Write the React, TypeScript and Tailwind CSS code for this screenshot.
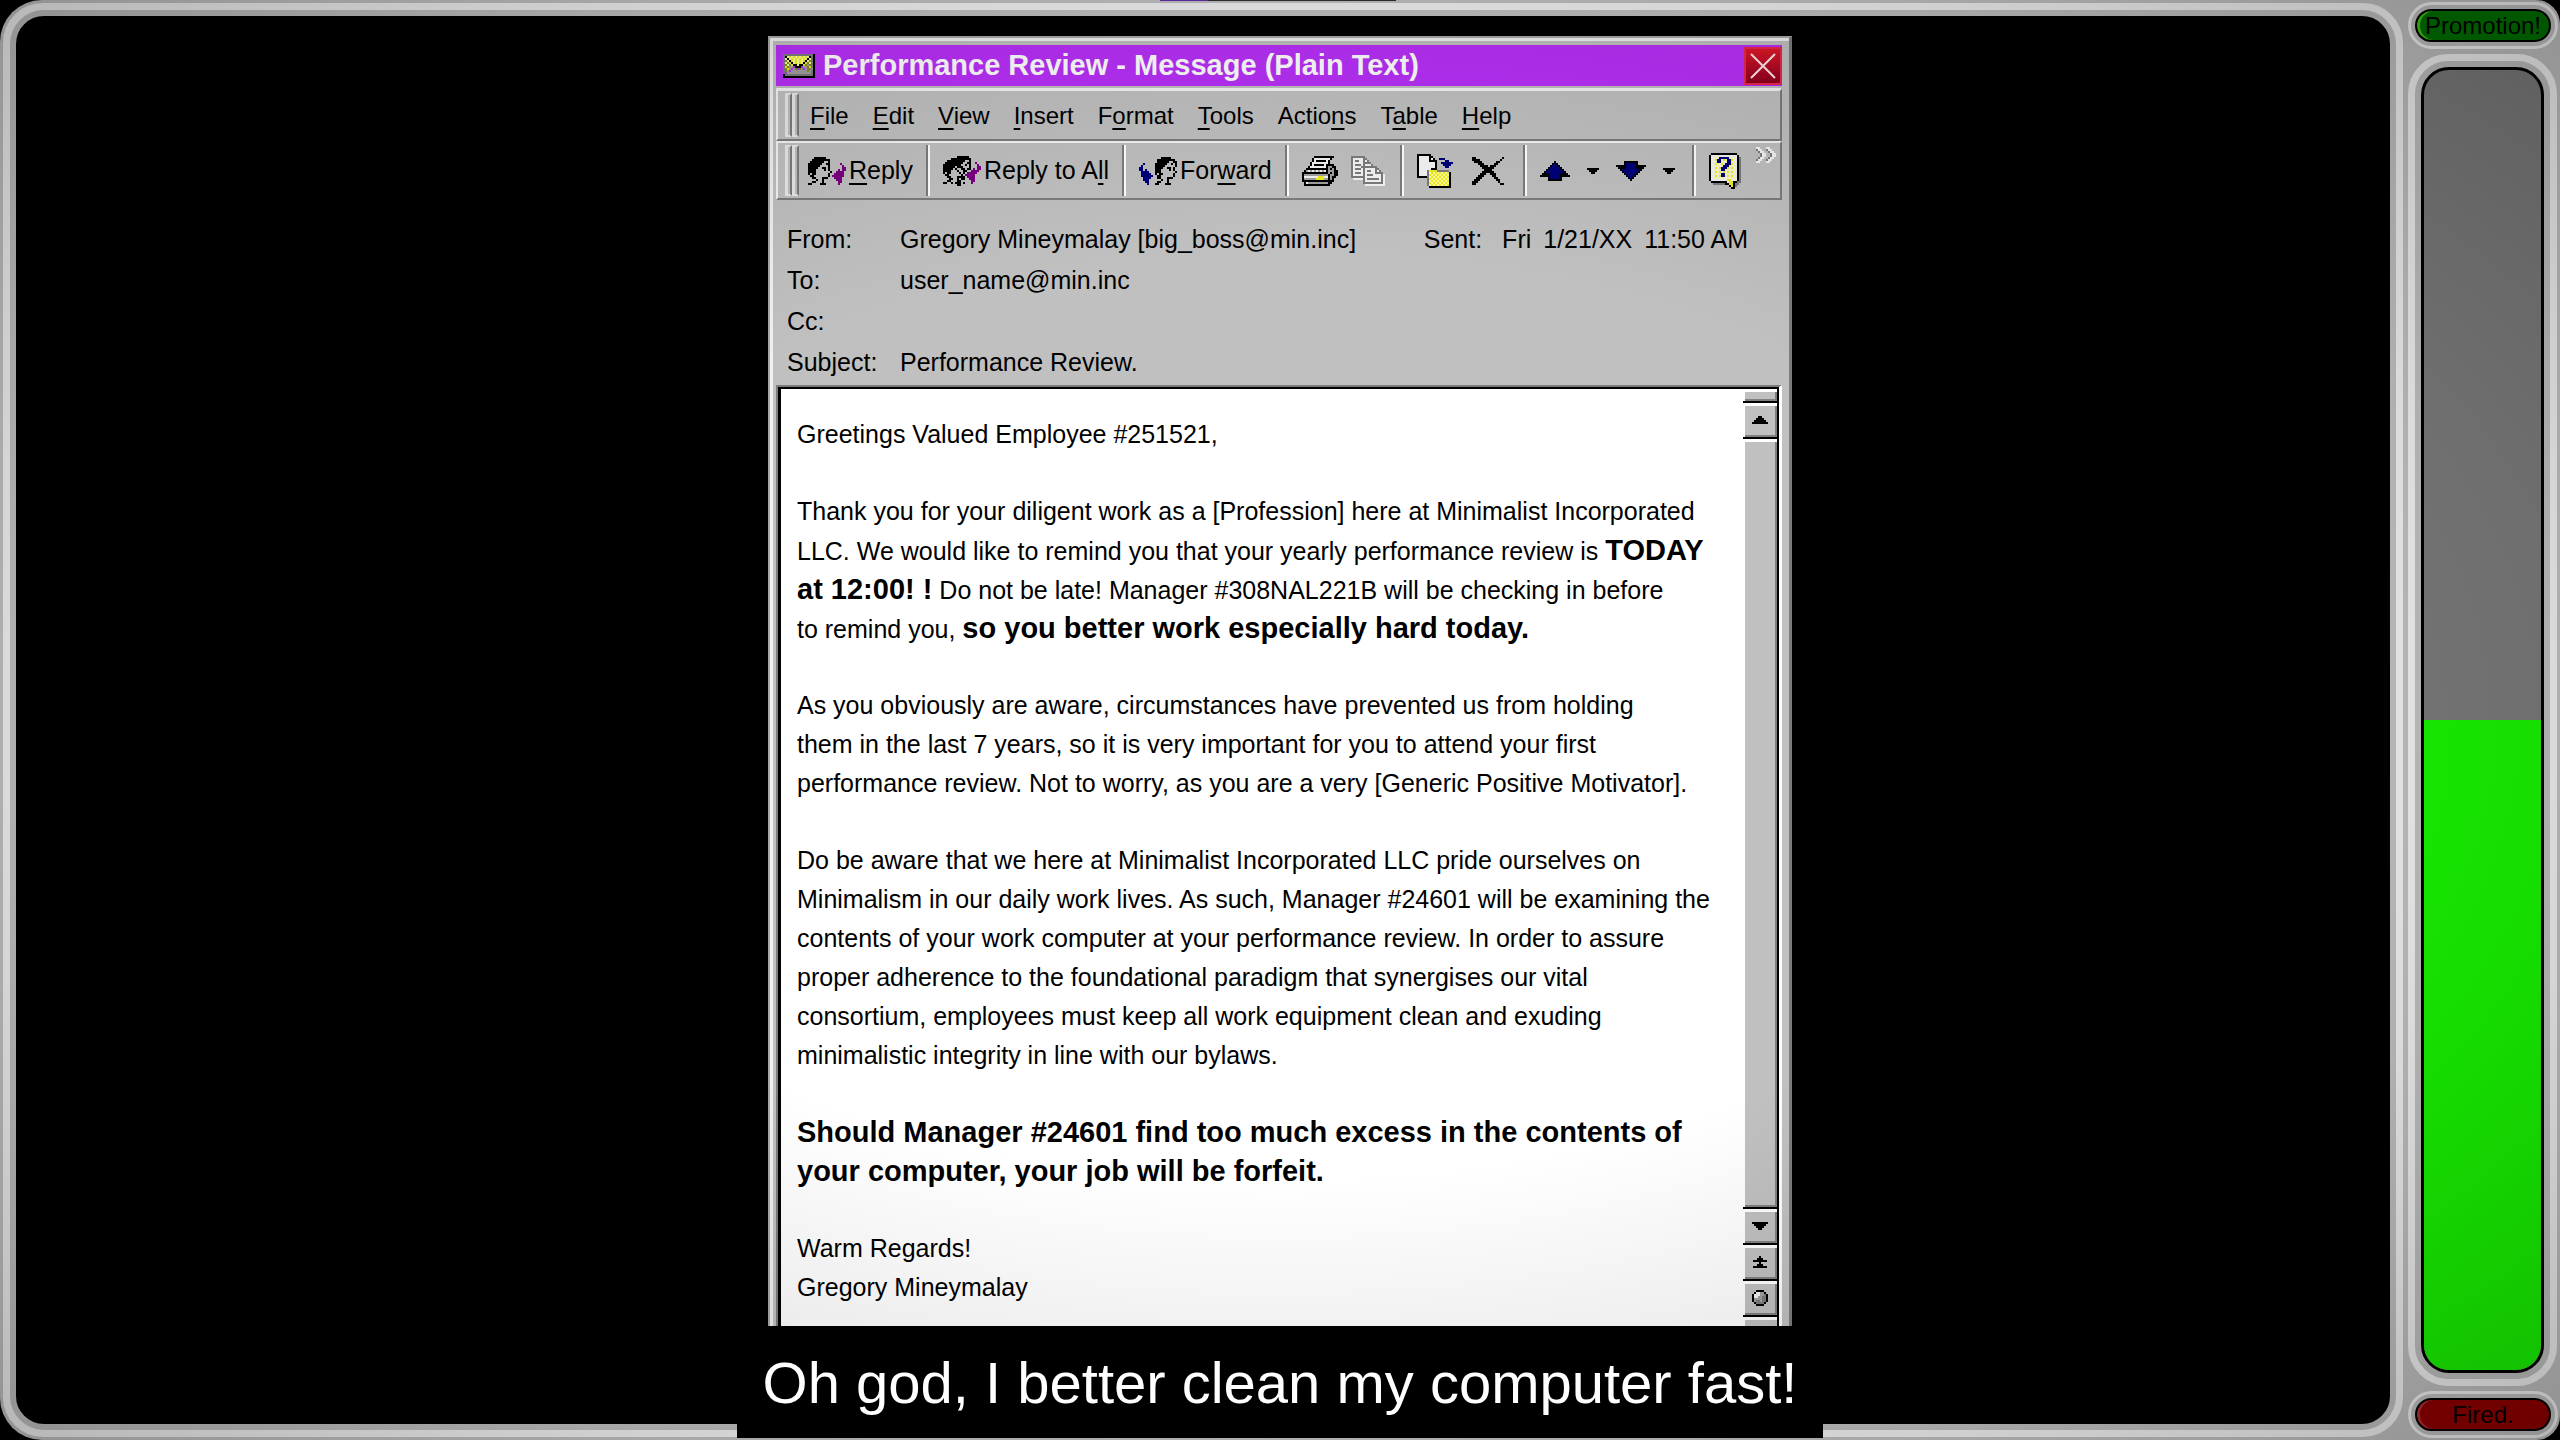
import React from "react";

const PALETTE: Record<string, string> = {
  k: "#000000",
  p: "#7a0080",
  b: "#00007a",
  w: "#f4f4f4",
  y: "#f0ee20",
  Y: "#ffffa0",
  g: "#7c7c7c",
  s: "#a0a0a0",
  o: "#8a8a20",
};

/* Draws an icon from rows of palette letters, two screen pixels per cell. */
function Pixels({ rows }: { rows: string[] }) {
  const w = Math.max(...rows.map((r) => r.length));
  const cells: React.ReactNode[] = [];
  rows.forEach((row, y) => {
    let x = 0;
    while (x < row.length) {
      const c = row[x];
      let end = x + 1;
      while (end < row.length && row[end] === c) end++;
      if (PALETTE[c]) cells.push(<rect key={`${x}-${y}`} x={x} y={y} width={end - x} height={1} fill={PALETTE[c]} />);
      x = end;
    }
  });
  return (
    <svg aria-hidden="true" className="shrink-0" width={w * 2} height={rows.length * 2} viewBox={`0 0 ${w} ${rows.length}`} shapeRendering="crispEdges">
      {cells}
    </svg>
  );
}

const ENVELOPE = [
  "gggggggggggggggk",
  "gkYyYyYyYyYyYkgk",
  "gYkYyYyYyYyYkYgk",
  "goYkyYyYyYykYogk",
  "gYoykYyYyYkyoYgk",
  "goYoykkYkkyosogk",
  "gyoss.kkk.ssoygk",
  "goys.so.os.sogsk",
  "gos.ssssssssosgk",
  "g.ssssssssssssgk",
  "kggggggggggggggk",
  "kkkkkkkkkkkkkkkk",
];
const REPLY = [
  "...kkkkkk..........",
  "..kkkkkkkkk........",
  ".kkkkkkk..k........",
  "kkkkkkk..kk.....p..",
  "kkkkkk....k......p.",
  "kkkkk..kk.k......pp",
  "kkkk....k.k....p.pp",
  "kkkk.......k..pppp.",
  "k.kk......k..ppppp.",
  ".kk.......k.pppppp.",
  "..kk...kkk...pppp..",
  "....k..k......ppp..",
  "..kk...k.......pp..",
  "kk....kkk......p...",
];
const REPLY_ALL = [
  ".......kkkkkk......",
  "....kkkkkkkkkk.....",
  "..kkkkkkkkk..k.....",
  ".kkkkkkkkk..kk..p..",
  "kkkkkkkkk..k.k...p.",
  "kkkkkk.kkk...k...pp",
  "kkkkk.k..kk.kk.p.pp",
  "kkkk...k..kk..pppp.",
  "k.kk....k.k.ppppp..",
  ".kk......k.ppppp...",
  "..kk...kkkk.pppp...",
  "...kk..k.kk..ppp...",
  "..kk...kk.....pp...",
  "kk..k.kkk.k...p....",
  ".......kk..........",
];
const FORWARD = [
  "...........kkkkk...",
  ".........kkkkkkkkk.",
  ".........kkkkkk..kk",
  "..b.....kkkkkk..k.k",
  ".b......kkkkk.....k",
  "bb......kkkk..kk.k.",
  "bb.b....kkk....k.k.",
  ".bbbb...kkk.......k",
  ".bbbbb..k.kk.....k.",
  ".bbbbbb..kk......k.",
  "..bbbb...kk...kkk..",
  "..bbb......k..k....",
  "...bb....kk...k....",
  "....b...kk...kkk...",
];
const PRINTER = [
  "......kkkkkkkkkk..",
  ".....kwwwwwwwwk...",
  ".....kwkkkkkwk....",
  "....kwwwwwwwwk....",
  "....kwkkkkkwkkkk..",
  "...kwwwwwwwwksskk.",
  "..kkkkkkkkkkksksk.",
  ".kswswswswswkssskk",
  "kkkkkkkkkkkkkskskk",
  "kssssssssssssksskk",
  "kwwwwwwwyyywwkskk.",
  "kssssssyyyyssksk..",
  "kkkkkkkkkkkkkkkk..",
  ".kwsssssssssskk...",
  ".kkkkkkkkkkkkk....",
];
const COPY = [
  "ggggggg...........",
  "gwwwwwgg..........",
  "gwggwwgwg.........",
  "gwwwwwgggg........",
  "gwgggwgwwwg.......",
  "gwwwwgggggggg.....",
  "gwgggwgwwwwwgg....",
  "gwwwwwgwggwwgwg...",
  "gwgggwgwwwwwgggg..",
  "gwwwwwgwgggwwwwgw.",
  "gggggggwwwwwwwwgw.",
  ".wwwwwgwggggggwgw.",
  "......gwwwwwwwwgw.",
  "......ggggggggggw.",
  ".......wwwwwwwwww.",
];
const MOVE = [
  "kkkkkkk...........",
  "kwwwwwkk..........",
  "kwwwwwkwk..bbb....",
  "kwwwwwkkkk....bb..",
  "kwwwwwwwwk..bbbbbb",
  "kwwwwwwwwk...bbbb.",
  "kwwwwwwwwk....bb..",
  "kwwwwwwkkk........",
  "kwwwwgyyyygggggg..",
  "kwwwwgYyYyYyYyYyk.",
  "kwwwwgyYyYyYyYyYk.",
  "kkkkkgYyYyYyYyYyk.",
  ".....gyYyYyYyYyYk.",
  ".....gYyYyYyYyYyk.",
  ".....gyYyYyYyYyYk.",
  ".....gYyYyYyYyYyk.",
  "......kkkkkkkkkkk.",
];
const DELETE = [
  "kk.............k",
  "kkkk..........k.",
  ".kkkk.......kk..",
  "...kkk.....kk...",
  "....kkkk.kkk....",
  ".....kkkkkk.....",
  "......kkkk......",
  ".....kkkkkk.....",
  "....kkk..kkk....",
  "...kkk....kk....",
  "..kkk......kk...",
  ".kkk........kk..",
  "kkk..........k..",
  "kk............kk",
];
const UP = [
  ".......k.......",
  "......kbk......",
  ".....kbbbk.....",
  "....kbbbbbk....",
  "...kbbbbbbbk...",
  "..kbbbbbbbbbk..",
  ".kkkkbbbbbkkkk.",
  "kkkkkbbbbbkkkkk",
  "....kbbbbbk....",
  "....kkkkkkk....",
];
const DOWN = [...UP].reverse();
const SMALL_DOWN = ["kkkkkk", ".kkkk.", "..kk.."];
const HELP = [
  ".kkkkkkkkkkkkk.",
  "kwwwwwwwwwwwwwk",
  "kwYwYbbbbbYwYwkg",
  "kwwybbwyYbbywwkg",
  "kwYwbbYwYbbwYwkg",
  "kwwyYwywbbbywwkg",
  "kwYwYwYbbbYwYwkg",
  "kwwywybbbywywwkg",
  "kwYwYwbbYwYwYwkg",
  "kwwywywywywywwkg",
  "kwYwYwbbYwYwYwkg",
  "kwwywybbwywywwkg",
  "kwYwYwYwYwYwYwkg",
  "kwwwwwwwwyywwwkg",
  ".kkkkkkkkwyykkgg",
  "..ggggggkkyykgg.",
  "..........kykg..",
  "...........kk...",
];
const CHEVRONS = [
  "ww...ww...",
  "gww..gww..",
  ".gww..gww.",
  "..gww..gww",
  "..gww..gww",
  ".gww..gww.",
  "gww..gww..",
  "ww...ww...",
];
const ARROW_UP = ["...kk...", "..kkkk..", ".kkkkkk.", "kkkkkkkk"];
const ARROW_DOWN = [...ARROW_UP].reverse();
const PAGE_UP = ["...k...", "..kkk..", "kkkkkkk", "...k...", "..kkk..", "kkkkkkk"];
const CIRCLE = [
  "..kkkk..",
  ".kwwssk.",
  "kwwwssgk",
  "kwwssggk",
  "kssssggk",
  "ksggsggk",
  ".kggggk.",
  "..kkkk..",
];

const U = ({ children }: { children: React.ReactNode }) => (
  <span className="underline decoration-2 underline-offset-4">{children}</span>
);

const MENUS: [string, string, string][] = [
  ["", "F", "ile"],
  ["", "E", "dit"],
  ["", "V", "iew"],
  ["", "I", "nsert"],
  ["F", "o", "rmat"],
  ["", "T", "ools"],
  ["Actio", "n", "s"],
  ["T", "a", "ble"],
  ["", "H", "elp"],
];

const Grip = () => (
  <span className="flex shrink-0 self-stretch">
    <span className="w-[7px] border-2 border-l-[3px] border-[#e8e8e8] border-r-[#7c7c7c]" />
    <span className="w-[7px] border-2 border-l-[3px] border-[#e8e8e8] border-r-[#7c7c7c]" />
  </span>
);

const Divider = () => <span className="w-1 shrink-0 self-stretch border-l-2 border-r-2 border-l-[#7c7c7c] border-r-white" />;

function Tool({ label, rows, children }: { label: string; rows: string[]; children?: React.ReactNode }) {
  return (
    <button type="button" aria-label={label} className="flex shrink-0 items-center gap-[3px] whitespace-nowrap">
      <Pixels rows={rows} />
      {children && <span>{children}</span>}
    </button>
  );
}

function ScrollButton({ label, rows }: { label: string; rows: string[] }) {
  return (
    <button
      type="button"
      aria-label={label}
      className="flex h-9 shrink-0 items-center justify-center border-b-2 border-black bg-[#c0c0c0] shadow-[inset_2px_3px_0_#ffffff,inset_-2px_-2px_0_#808080]"
    >
      <Pixels rows={rows} />
    </button>
  );
}

const Field = ({ label, children }: { label: string; children?: React.ReactNode }) => (
  <div className="flex">
    <dt className="w-[113px] shrink-0">{label}</dt>
    <dd>{children}</dd>
  </div>
);

const Strong = ({ children }: { children: React.ReactNode }) => <b className="text-[29px]">{children}</b>;

const Para = ({ lines }: { lines: React.ReactNode[] }) => (
  <p className="mb-[38px]">
    {lines.map((line, i) => (
      <span key={i} className="block h-[39px]">
        {line}
      </span>
    ))}
  </p>
);

function MailWindow() {
  return (
    <section className="flex w-2/5 flex-col overflow-hidden border-l-2 border-r-[3px] border-t-2 border-[#a8a8a8] border-r-[#7c7c7c] bg-[#c0c0c0]">
      <div className="flex min-h-0 grow flex-col border-l-[3px] border-t-[3px] border-[#f0f0f0] pl-[3px] pr-[7px] pt-1 font-['Liberation_Sans',sans-serif] text-[25px] text-black">
        <header className="flex h-[41px] shrink-0 items-center bg-[#b830f8] pl-[7px]">
          <Pixels rows={ENVELOPE} />
          <h1 className="grow whitespace-nowrap pl-2 text-[29px] font-bold text-white">Performance Review - Message (Plain Text)</h1>
          <button type="button" aria-label="Close" className="flex size-[38px] items-center justify-center border-2 border-[#e82850] bg-linear-to-b from-[#e01828] to-[#900020]">
            <svg aria-hidden="true" width="26" height="26" viewBox="0 0 26 26" stroke="#ffe8e8" strokeWidth="2">
              <path d="M1 1L25 25M25 1L1 25" />
            </svg>
          </button>
        </header>
        <nav className="mt-0.5 flex h-[53px] shrink-0 items-center border-b-2 border-l-2 border-r-2 border-t-[3px] border-[#f4f4f4] border-b-[#7c7c7c] border-r-[#7c7c7c] py-0.5 pl-[7px] text-[24px]">
          <Grip />
          <ul className="flex gap-6 pl-[11px] pt-0.5">
            {MENUS.map(([a, u, b]) => (
              <li key={a + u + b}>
                <button type="button">
                  {a}
                  <U>{u}</U>
                  {b}
                </button>
              </li>
            ))}
          </ul>
        </nav>
        <div role="toolbar" className="relative flex h-[59px] shrink-0 items-center gap-[13px] border-2 border-[#f4f4f4] border-b-[#7c7c7c] border-r-[#7c7c7c] py-0.5 pl-[7px]">
          <span className="-mr-1 flex self-stretch">
            <Grip />
          </span>
          <Tool label="Reply" rows={REPLY}>
            <U>R</U>eply
          </Tool>
          <Divider />
          <Tool label="Reply to All" rows={REPLY_ALL}>
            Reply to A<U>l</U>l
          </Tool>
          <Divider />
          <Tool label="Forward" rows={FORWARD}>
            For<U>w</U>ard
          </Tool>
          <Divider />
          <Tool label="Print" rows={PRINTER} />
          <Tool label="Copy" rows={COPY} />
          <Divider />
          <Tool label="Move to folder" rows={MOVE} />
          <span className="px-1.5">
            <Tool label="Delete" rows={DELETE} />
          </span>
          <Divider />
          <Tool label="Previous" rows={UP} />
          <span className="px-1">
            <Tool label="Previous options" rows={SMALL_DOWN} />
          </span>
          <Tool label="Next" rows={DOWN} />
          <span className="px-1">
            <Tool label="Next options" rows={SMALL_DOWN} />
          </span>
          <Divider />
          <Tool label="Help" rows={HELP} />
          <span className="absolute right-1 top-1">
            <Tool label="More buttons" rows={CHEVRONS} />
          </span>
        </div>
        <div className="flex shrink-0 justify-between whitespace-nowrap pb-0.5 pl-[11px] pr-[34px] pt-[19px] leading-[41px]">
          <dl>
            <Field label="From:">Gregory Mineymalay [big_boss@min.inc]</Field>
            <Field label="To:">user_name@min.inc</Field>
            <Field label="Cc:" />
            <Field label="Subject:">Performance Review.</Field>
          </dl>
          <dl className="flex gap-5">
            <dt>Sent:</dt>
            <dd className="flex gap-3">
              <span>Fri</span>
              <span>1/21/XX</span>
              <span>11:50 AM</span>
            </dd>
          </dl>
        </div>
        <div className="flex min-h-0 grow border-l-2 border-r-[3px] border-t-2 border-[#7c7c7c] border-r-white">
          <div className="flex min-h-0 min-w-0 grow border-l-[3px] border-r-2 border-t-2 border-black">
            <article className="min-w-0 grow overflow-hidden whitespace-nowrap bg-white pl-4 pt-[26px] leading-[39px]">
              <Para lines={["Greetings Valued Employee #251521,"]} />
              <Para
                lines={[
                  "Thank you for your diligent work as a [Profession] here at Minimalist Incorporated",
                  <>
                    LLC. We would like to remind you that your yearly performance review is <Strong>TODAY</Strong>
                  </>,
                  <>
                    <Strong>at 12:00! !</Strong> Do not be late! Manager #308NAL221B will be checking in before
                  </>,
                  <>
                    to remind you, <Strong>so you better work especially hard today.</Strong>
                  </>,
                ]}
              />
              <Para
                lines={[
                  "As you obviously are aware, circumstances have prevented us from holding",
                  "them in the last 7 years, so it is very important for you to attend your first",
                  "performance review. Not to worry, as you are a very [Generic Positive Motivator].",
                ]}
              />
              <Para
                lines={[
                  "Do be aware that we here at Minimalist Incorporated LLC pride ourselves on",
                  "Minimalism in our daily work lives. As such, Manager #24601 will be examining the",
                  "contents of your work computer at your performance review. In order to assure",
                  "proper adherence to the foundational paradigm that synergises our vital",
                  "consortium, employees must keep all work equipment clean and exuding",
                  "minimalistic integrity in line with our bylaws.",
                ]}
              />
              <Para
                lines={[
                  <Strong>Should Manager #24601 find too much excess in the contents of</Strong>,
                  <Strong>your computer, your job will be forfeit.</Strong>,
                ]}
              />
              <Para lines={["Warm Regards!", "Gregory Mineymalay"]} />
            </article>
            <div className="flex w-[34px] shrink-0 flex-col">
              <div className="h-3.5 shrink-0 border-b-2 border-black bg-[#c0c0c0] shadow-[inset_2px_3px_0_#ffffff,inset_-2px_-2px_0_#808080]" />
              <ScrollButton label="Scroll up" rows={ARROW_UP} />
              <div className="grow border-b-2 border-black bg-[#c0c0c0] shadow-[inset_2px_3px_0_#ffffff,inset_-2px_-2px_0_#808080]" />
              <ScrollButton label="Scroll down" rows={ARROW_DOWN} />
              <ScrollButton label="Previous page" rows={PAGE_UP} />
              <ScrollButton label="Select browse object" rows={CIRCLE} />
              <div className="h-[9px] shrink-0 bg-[#c0c0c0] shadow-[inset_2px_3px_0_#ffffff]" />
            </div>
          </div>
        </div>
      </div>
    </section>
  );
}

const Pill = ({ tone, children }: { tone: string; children: React.ReactNode }) => (
  <div className="shrink-0 rounded-full border-[3px] border-[#f0f0f0] bg-[#c0c0c0] p-1">
    <div className={`flex h-[33px] items-center justify-center rounded-full border-2 border-black text-[24px] text-black ${tone}`}>{children}</div>
  </div>
);

export default function App() {
  return (
    <main className="relative flex h-screen overflow-hidden bg-black font-['Liberation_Sans',sans-serif]">
      <div className="grow bg-linear-to-r from-black from-50% to-[#c0c0c0] to-50%">
        <div className="h-full rounded-[42px] border-[3px] border-r-0 border-[#c0c0c0] bg-[#c0c0c0]">
          <div className="h-full rounded-[40px] border-[7px] border-[#f0f0f0] bg-[#f0f0f0]">
            <div className="h-full rounded-[34px] border-[6px] border-[#c0c0c0] bg-black" />
          </div>
        </div>
      </div>
      <aside className="flex w-[157px] shrink-0 flex-col gap-[5px] rounded-r-[24px] bg-[#c0c0c0] pl-[5px] pr-0.5 py-0.5">
        <Pill tone="bg-[#007000] shadow-[inset_3px_0_0_#40c010]">Promotion!</Pill>
        <div className="mr-px flex grow rounded-[40px] border-[7px] border-[#f0f0f0] bg-[#c0c0c0] p-1.5">
          <div role="meter" aria-label="Standing" aria-valuenow={50} aria-valuemin={0} aria-valuemax={100} className="flex grow flex-col overflow-hidden rounded-[28px] border-[3px] border-black bg-[#7a7a7a]">
            <div className="grow" />
            <div className="h-1/2 bg-[#18f400]" />
          </div>
        </div>
        <Pill tone="bg-[#900000] shadow-[inset_3px_0_0_#b03030]">Fired.</Pill>
      </aside>
      <div className="absolute left-[1160px] top-0 flex h-px w-[236px] bg-[#303030]">
        <span className="w-12 bg-[#6030b0]" />
      </div>
      <div className="absolute inset-x-0 bottom-[114px] top-9 flex justify-center">
        <MailWindow />
      </div>
      <div className="pointer-events-none absolute inset-0 bg-[radial-gradient(ellipse_farthest-corner_at_center,transparent_45%,rgba(0,0,0,0.09)_70%,rgba(0,0,0,0.24)_100%)]" />
      <div className="absolute inset-x-0 bottom-0.5 flex justify-center">
        <p className="h-28 whitespace-nowrap bg-black px-[26px] text-[58px] leading-[114px] text-white">Oh god, I better clean my computer fast!</p>
      </div>
    </main>
  );
}
